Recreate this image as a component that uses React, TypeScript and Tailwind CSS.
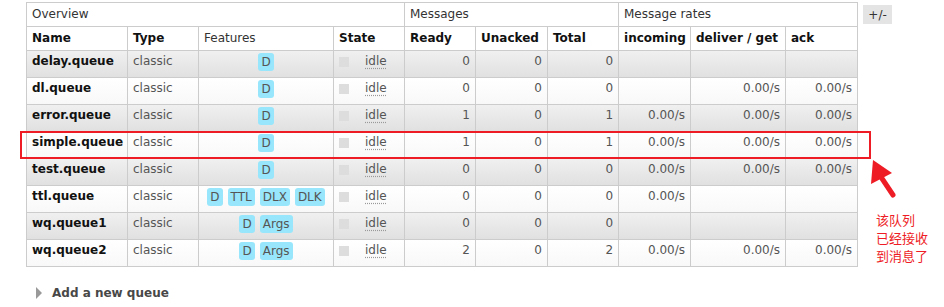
import React from "react";

type Row = {
  name: string;
  feats: string[];
  ready: number;
  unacked: number;
  total: number;
  incoming: string;
  deliver: string;
  ack: string;
};

const rows: Row[] = [
  { name: "delay.queue", feats: ["D"], ready: 0, unacked: 0, total: 0, incoming: "", deliver: "", ack: "" },
  { name: "dl.queue", feats: ["D"], ready: 0, unacked: 0, total: 0, incoming: "", deliver: "0.00/s", ack: "0.00/s" },
  { name: "error.queue", feats: ["D"], ready: 1, unacked: 0, total: 1, incoming: "0.00/s", deliver: "0.00/s", ack: "0.00/s" },
  { name: "simple.queue", feats: ["D"], ready: 1, unacked: 0, total: 1, incoming: "0.00/s", deliver: "0.00/s", ack: "0.00/s" },
  { name: "test.queue", feats: ["D"], ready: 0, unacked: 0, total: 0, incoming: "0.00/s", deliver: "0.00/s", ack: "0.00/s" },
  { name: "ttl.queue", feats: ["D", "TTL", "DLX", "DLK"], ready: 0, unacked: 0, total: 0, incoming: "0.00/s", deliver: "", ack: "" },
  { name: "wq.queue1", feats: ["D", "Args"], ready: 0, unacked: 0, total: 0, incoming: "", deliver: "", ack: "" },
  { name: "wq.queue2", feats: ["D", "Args"], ready: 2, unacked: 0, total: 2, incoming: "0.00/s", deliver: "0.00/s", ack: "0.00/s" },
];

const cell = "border border-[#cccccc] px-[5px] pt-[3px] align-top leading-[15px]";
const num = cell + " text-right text-[#555555]";
const th1 = "border border-[#cccccc] px-[5px] align-middle text-left font-normal text-[#333333] leading-[15px]";
const th2 = "border border-[#cccccc] px-[5px] align-middle text-left font-bold text-[#111111] leading-[15px] whitespace-nowrap";

export default function App() {
  return (
    <div
      className="relative w-[944px] h-[307px] bg-white text-[12px] text-[#484848] overflow-hidden"
      style={{ fontFamily: '"DejaVu Sans", Verdana, sans-serif' }}
    >
      <div className="flex items-start pt-[2px] pl-[26px]">
        <table className="border-collapse table-fixed w-[831px]">
          <colgroup>
            <col className="w-[101px]" />
            <col className="w-[71px]" />
            <col className="w-[135px]" />
            <col className="w-[71px]" />
            <col className="w-[71px]" />
            <col className="w-[72px]" />
            <col className="w-[71px]" />
            <col className="w-[72px]" />
            <col className="w-[95px]" />
            <col className="w-[72px]" />
          </colgroup>
          <thead>
            <tr className="h-[24px] bg-white">
              <th colSpan={4} className={th1}>Overview</th>
              <th colSpan={3} className={th1}>Messages</th>
              <th colSpan={3} className={th1}>Message rates</th>
            </tr>
            <tr className="h-[24px] bg-white">
              <th className={th2}>Name</th>
              <th className={th2}>Type</th>
              <th className={th1}>Features</th>
              <th className={th2}>State</th>
              <th className={th2}>Ready</th>
              <th className={th2}>Unacked</th>
              <th className={th2}>Total</th>
              <th className={th2}>incoming</th>
              <th className={th2}>deliver / get</th>
              <th className={th2}>ack</th>
            </tr>
          </thead>
          <tbody>
            {rows.map((r, i) => (
              <tr
                key={r.name}
                className={
                  "h-[27px] " +
                  (i % 2 === 0
                    ? "bg-gradient-to-b from-[#f0f0f0] to-[#e0e0e0]"
                    : "bg-gradient-to-b from-white to-[#f8f8f8]")
                }
              >
                <td className={cell + " font-bold text-[#111111] whitespace-nowrap"}>{r.name}</td>
                <td className={cell + " text-[#555555]"}>classic</td>
                <td className="border border-[#cccccc] px-[5px] pt-[2px] align-top">
                  <div className="flex justify-center gap-[5px]">
                    {r.feats.map((f) => (
                      <span
                        key={f}
                        className="h-[18px] px-[3px] rounded-[3px] bg-[#98e6fb] text-[#555555] leading-[18px]"
                      >
                        {f}
                      </span>
                    ))}
                  </div>
                </td>
                <td className={cell}>
                  <div className="flex items-start">
                    <span className="mt-[3px] w-[10px] h-[10px] bg-[#dddddd]" />
                    <span className="ml-[16px] text-[#555555] underline decoration-dotted decoration-[#999999] underline-offset-[3px]">
                      idle
                    </span>
                  </div>
                </td>
                <td className={num}>{r.ready}</td>
                <td className={num}>{r.unacked}</td>
                <td className={num}>{r.total}</td>
                <td className={num}>{r.incoming}</td>
                <td className={num}>{r.deliver}</td>
                <td className={num}>{r.ack}</td>
              </tr>
            ))}
          </tbody>
        </table>
        <div className="ml-[5px] mt-[3px] w-[29px] h-[19px] bg-[#e4e4e4] text-[#333333] flex items-center justify-center leading-none">
          +/-
        </div>
      </div>

      <div className="flex items-center mt-[17px] pl-[36px]">
        <svg width="7" height="12" viewBox="0 0 7 12">
          <polygon points="0,0 6,6 0,12" fill="#999999" />
        </svg>
        <span className="ml-[9px] font-bold text-[#484848]">Add a new queue</span>
      </div>

      {/* annotation overlay */}
      <div className="absolute left-[20px] top-[131px] w-[851px] h-[28px] border-2 border-[#ee1c25]" />
      <svg className="absolute left-[860px] top-[155px]" width="40" height="45" viewBox="0 0 40 45">
        <polygon points="13,5 11,29 32,18" fill="#ee1c25" />
        <line x1="21" y1="22" x2="33" y2="40" stroke="#ee1c25" strokeWidth="5" strokeLinecap="round" />
      </svg>
      <div
        className="absolute left-[876px] top-[211px] flex flex-col text-[13px] text-[#ee1c25]"
        style={{ fontFamily: '"Noto Sans CJK SC", sans-serif' }}
      >
        <div className="h-[18px] leading-[18px]">该队列</div>
        <div className="h-[18px] leading-[18px]">已经接收</div>
        <div className="h-[18px] leading-[18px]">到消息了</div>
      </div>
    </div>
  );
}
